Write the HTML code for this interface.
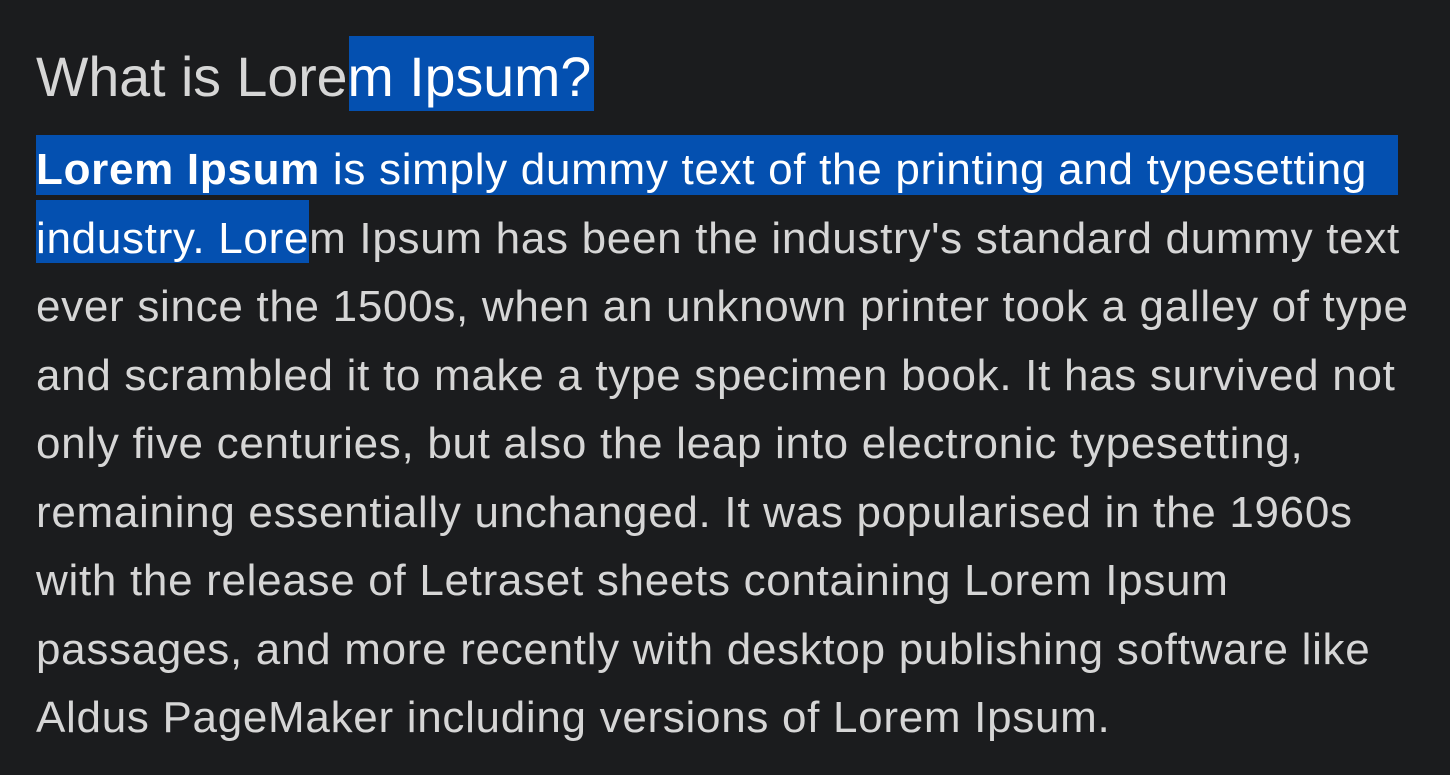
<!DOCTYPE html>
<html><head><meta charset="utf-8"><style>
html,body{margin:0;padding:0;background:#1b1c1e;width:1450px;height:775px;overflow:hidden}
body{position:relative;font-family:"Liberation Sans",Arial,sans-serif;color:#d6d6d6}
.sel{position:absolute;background:#0450b0}
h1{position:absolute;left:36px;top:42px;margin:0;font-weight:normal;font-size:55.5px;line-height:70px;white-space:nowrap}
.body{position:absolute;left:36px;top:136px;font-size:44px;letter-spacing:0.7px;line-height:68.5px;white-space:nowrap}
.w{color:#fff}
</style></head><body>
<div class="sel" style="left:349px;top:36px;width:245px;height:75px"></div>
<div class="sel" style="left:36px;top:135px;width:1362px;height:60px"></div>
<div class="sel" style="left:36px;top:200px;width:273px;height:63px"></div>
<h1>What is Lore<span class="w">m Ipsum?</span></h1>
<div class="body">
<span class="w"><b>Lorem Ipsum</b> is simply dummy text of the printing and typesetting</span><br>
<span class="w">industry. Lore</span>m Ipsum has been the industry's standard dummy text<br>
ever since the 1500s, when an unknown printer took a galley of type<br>
and scrambled it to make a type specimen book. It has survived not<br>
only five centuries, but also the leap into electronic typesetting,<br>
remaining essentially unchanged. It was popularised in the 1960s<br>
with the release of Letraset sheets containing Lorem Ipsum<br>
passages, and more recently with desktop publishing software like<br>
Aldus PageMaker including versions of Lorem Ipsum.
</div>
</body></html>
